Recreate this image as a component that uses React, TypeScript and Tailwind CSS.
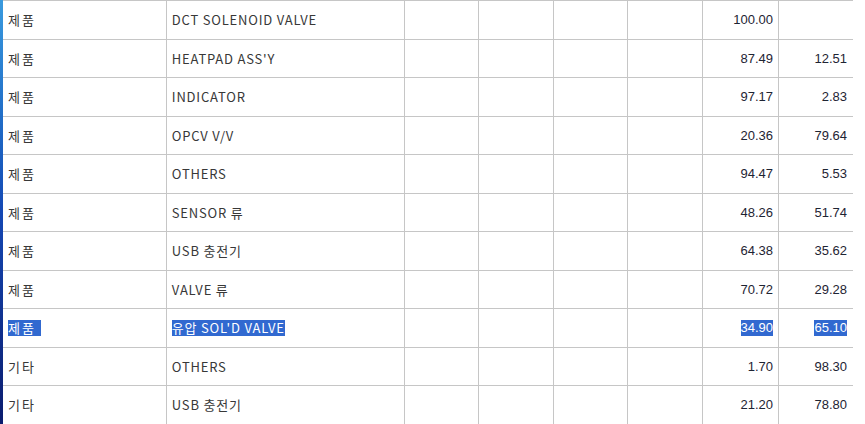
import React from "react";

type Row = {
  kind: string;
  name: string;
  a: string;
  b: string;
  selected?: boolean;
};

const rows: Row[] = [
  { kind: "제품", name: "DCT SOLENOID VALVE", a: "100.00", b: "" },
  { kind: "제품", name: "HEATPAD ASS'Y", a: "87.49", b: "12.51" },
  { kind: "제품", name: "INDICATOR", a: "97.17", b: "2.83" },
  { kind: "제품", name: "OPCV V/V", a: "20.36", b: "79.64" },
  { kind: "제품", name: "OTHERS", a: "94.47", b: "5.53" },
  { kind: "제품", name: "SENSOR 류", a: "48.26", b: "51.74" },
  { kind: "제품", name: "USB 충전기", a: "64.38", b: "35.62" },
  { kind: "제품", name: "VALVE 류", a: "70.72", b: "29.28" },
  { kind: "제품", name: "유압 SOL'D VALVE", a: "34.90", b: "65.10", selected: true },
  { kind: "기타", name: "OTHERS", a: "1.70", b: "98.30" },
  { kind: "기타", name: "USB 충전기", a: "21.20", b: "78.80" },
];

const textFont = "font-['Noto_Sans_CJK_KR','Noto_Sans',sans-serif]";
const numFont = "font-['Liberation_Sans','Noto_Sans_CJK_KR',sans-serif]";

const Sel = ({ on, children }: { on?: boolean; children: React.ReactNode }) =>
  on ? (
    <span className="bg-[#3169d0] text-white whitespace-pre leading-[16px]">{children}</span>
  ) : (
    <span className="whitespace-pre">{children}</span>
  );

export default function App() {
  return (
    <div className="flex w-[865px] h-[424px] overflow-hidden bg-white">
      <div className="w-[3px] h-full bg-gradient-to-b from-[#3a9ade] via-[#1548b4] to-[#0b1c6e]" />
      <div className="w-[850px] border-t border-[#c6c6c6]">
        {rows.map((r, i) => (
          <div
            key={i}
            className={`flex border-b border-[#c6c6c6] ${i % 2 === 0 ? "h-[39px]" : "h-[38px]"}`}
          >
            <div className={`w-[164px] border-r border-[#c6c6c6] flex items-center pl-[5px] text-[13px] tracking-[2px] text-[#383838] ${textFont}`}>
              <Sel on={r.selected}>{r.selected ? r.kind + " " : r.kind}</Sel>
            </div>
            <div className={`w-[238px] border-r border-[#c6c6c6] flex items-center pl-[5px] text-[13px] tracking-[0.8px] text-[#383838] ${textFont}`}>
              <Sel on={r.selected}>{r.name}</Sel>
            </div>
            <div className="w-[75px] border-r border-[#c6c6c6]" />
            <div className="w-[75px] border-r border-[#c6c6c6]" />
            <div className="w-[74px] border-r border-[#c6c6c6]" />
            <div className="w-[75px] border-r border-[#c6c6c6]" />
            <div className={`w-[76px] border-r border-[#c6c6c6] flex items-center justify-end pr-[5px] text-[13px] text-[#1e2433] ${numFont}`}>
              <Sel on={r.selected}>{r.a}</Sel>
            </div>
            <div className={`w-[74px] flex items-center justify-end pr-[6px] text-[13px] text-[#1e2433] ${numFont}`}>
              <Sel on={r.selected}>{r.b}</Sel>
            </div>
          </div>
        ))}
      </div>
    </div>
  );
}
